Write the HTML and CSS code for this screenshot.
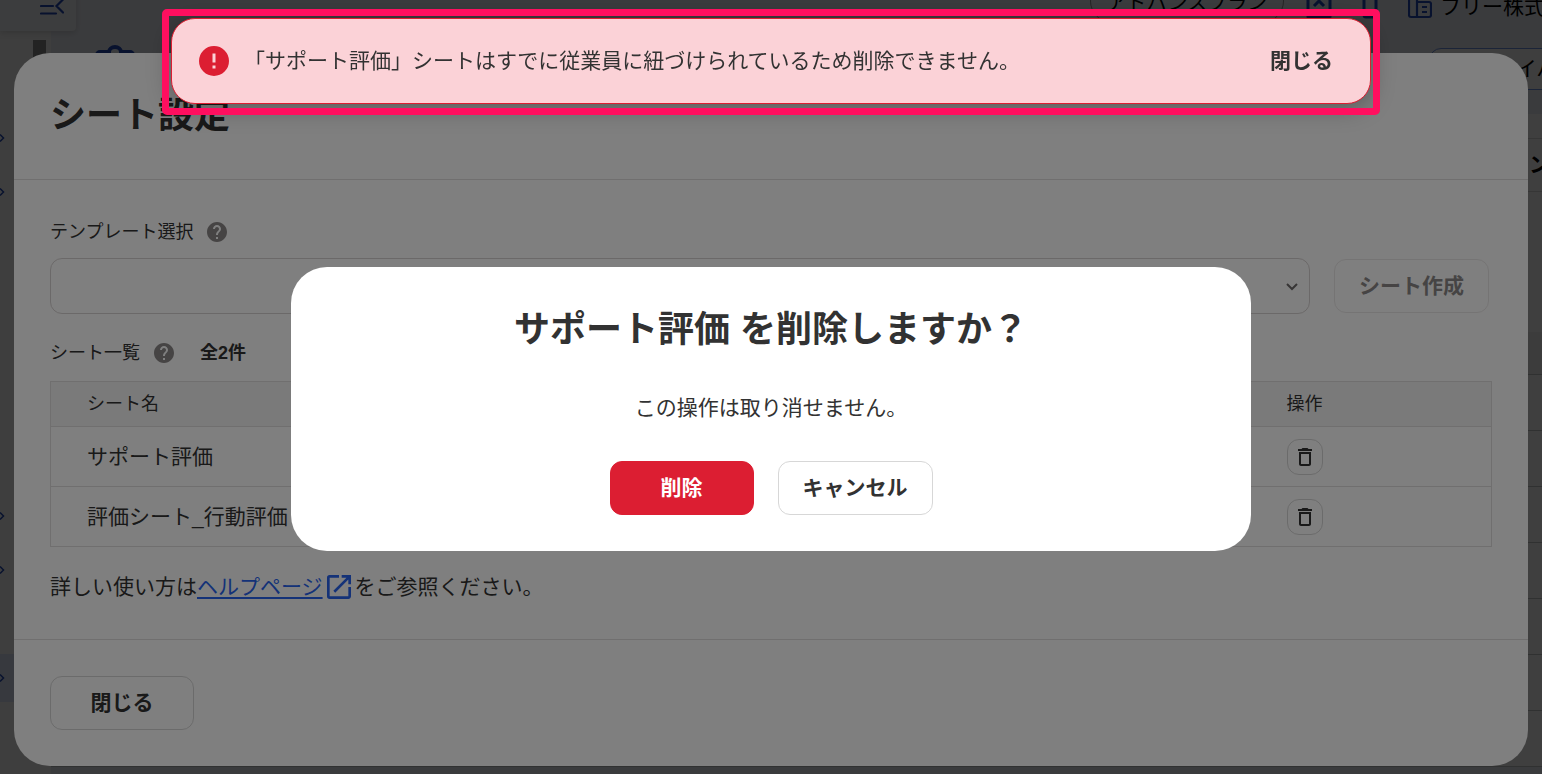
FILE: index.html
```html
<!DOCTYPE html>
<html lang="ja">
<head>
<meta charset="utf-8">
<title>シート設定</title>
<link rel="stylesheet" href="styles.css">
</head>
<body>
<div class="app">
  <aside class="sidebar">
    <button class="collapse" type="button" aria-label="メニューを閉じる">
      <svg viewBox="0 0 24 20" width="24" height="20"><path d="M1 2h13M1 10h12M1 17.500h15M23 3.500l-6.500 6.500 6.500 6.500" fill="none" stroke="currentColor" stroke-width="2.200" stroke-linecap="round"/></svg>
    </button>
    <span class="scroll-thumb"></span>
    <ul class="side-list">
      <li><svg class="chev" viewBox="0 0 6 10"><path d="M0 1.500L3.500 5 0 8.500"/></svg></li>
      <li><svg class="chev" viewBox="0 0 6 10"><path d="M0 1.500L3.500 5 0 8.500"/></svg></li>
      <li></li><li></li><li></li><li></li><li></li>
      <li><svg class="chev" viewBox="0 0 6 10"><path d="M0 1.500L3.500 5 0 8.500"/></svg></li>
      <li><svg class="chev" viewBox="0 0 6 10"><path d="M0 1.500L3.500 5 0 8.500"/></svg></li>
      <li></li>
      <li class="active"><svg class="chev" viewBox="0 0 6 10"><path d="M0 1.500L3.500 5 0 8.500"/></svg></li>
    </ul>
  </aside>
  <main class="main">
    <header class="topbar">
      <span class="plan">アドバンスプラン</span>
      <svg class="top-icon" viewBox="0 0 26 24" width="26" height="24"><path d="M2 3v19h22V3M8 11l5-5 5 5M2 3h22" fill="none" stroke="currentColor" stroke-width="3" stroke-linejoin="round"/></svg>
      <svg class="top-icon phone" viewBox="0 0 16 24" width="16" height="24"><rect x="2" y="1" width="12" height="21" rx="2" fill="none" stroke="currentColor" stroke-width="3"/></svg>
      <svg class="top-icon" viewBox="0 0 24 24" width="24" height="24"><path d="M8 3H3a2 2 0 0 0-2 2v15a2 2 0 0 0 2 2h18a2 2 0 0 0 2-2V9a2 2 0 0 0-2-2H9V1M9 3v19M14 12h5M14 17h5" fill="none" stroke="currentColor" stroke-width="2.200"/></svg>
      <span class="company">フリー株式</span>
    </header>
    <div class="page-head">
      <svg class="head-icon" viewBox="0 0 40 36" width="40" height="36"><path d="M2 34V10a3 3 0 0 1 3-3h9a6 5 0 0 1 12 0h9a3 3 0 0 1 3 3v24z" fill="none" stroke="currentColor" stroke-width="4"/></svg>
      <button class="archive" type="button">アーカイバ</button>
    </div>
    <div class="panel">
      <div class="panel-tab">コメン</div>
      <div class="grid-head"></div>
      <div class="grid-row"></div><div class="grid-row"></div><div class="grid-row"></div><div class="grid-row"></div>
      <div class="grid-row"></div><div class="grid-row"></div><div class="grid-row"></div>
    </div>
  </main>
</div>

<div class="overlay">
  <section class="sheet" role="dialog" aria-labelledby="sheet-title">
    <header class="sheet-header"><h1 class="title" id="sheet-title">シート設定</h1></header>
    <div class="sheet-body">
      <div class="label-row">
        <label for="template">テンプレート選択</label>
        <svg class="help" viewBox="0 0 24 24"><use href="#help-icon"/></svg>
      </div>
      <div class="template-row">
        <div class="select-wrap">
          <select class="select" id="template"><option></option></select>
          <svg class="caret" viewBox="0 0 14 10" width="14" height="10"><path d="M2 2l5 5 5-5" fill="none" stroke="currentColor" stroke-width="2"/></svg>
        </div>
        <button class="btn" type="button" disabled>シート作成</button>
      </div>
      <div class="label-row">
        <span>シート一覧</span>
        <svg class="help" viewBox="0 0 24 24"><use href="#help-icon"/></svg>
        <strong class="count">全2件</strong>
      </div>
      <table class="table">
        <thead><tr><th>シート名</th><th class="ops">操作</th></tr></thead>
        <tbody>
          <tr><td>サポート評価</td><td><button class="trash" type="button" aria-label="サポート評価を削除"><svg viewBox="0 0 24 24" width="24" height="24"><use href="#trash-icon"/></svg></button></td></tr>
          <tr><td>評価シート_行動評価</td><td><button class="trash" type="button" aria-label="評価シート_行動評価を削除"><svg viewBox="0 0 24 24" width="24" height="24"><use href="#trash-icon"/></svg></button></td></tr>
        </tbody>
      </table>
      <p class="guide">詳しい使い方は<a class="link" href="#help">ヘルプページ</a><svg class="external" viewBox="0 0 24 24" width="32" height="32"><path fill="currentColor" d="M19 19H5V5h7V3H5a2 2 0 0 0-2 2v14a2 2 0 0 0 2 2h14c1.100 0 2-.9 2-2v-7h-2v7zM14 3v2h3.590l-9.830 9.830 1.410 1.410L19 6.410V10h2V3h-7z"/></svg>をご参照ください。</p>
    </div>
    <footer class="sheet-footer"><button class="btn wide" type="button">閉じる</button></footer>
  </section>
</div>

<div class="overlay overlay-confirm">
  <section class="confirm" role="alertdialog" aria-labelledby="confirm-title">
    <h2 class="title" id="confirm-title">サポート評価 を削除しますか？</h2>
    <p class="message">この操作は取り消せません。</p>
    <div class="actions">
      <button class="btn wide danger" type="button">削除</button>
      <button class="btn" type="button">キャンセル</button>
    </div>
  </section>
</div>

<div class="toast-frame">
  <div class="toast" role="alert">
    <svg class="alert-icon" viewBox="0 0 24 24" width="36" height="36"><path fill="currentColor" d="M12 2a10 10 0 1 0 0 20 10 10 0 0 0 0-20zm1 15h-2v-2h2v2zm0-4h-2V7h2v6z"/></svg>
    <span class="toast-text">「サポート評価」シートはすでに従業員に紐づけられているため削除できません。</span>
    <button class="toast-close" type="button">閉じる</button>
  </div>
</div>

<svg class="defs" width="0" height="0" aria-hidden="true">
  <symbol id="help-icon" viewBox="0 0 24 24"><path fill="currentColor" d="M12 2C6.480 2 2 6.480 2 12s4.480 10 10 10 10-4.480 10-10S17.520 2 12 2zm1 17h-2v-2h2v2zm2.070-7.750-.9.920C13.450 12.900 13 13.500 13 15h-2v-.5c0-1.100.45-2.100 1.170-2.830l1.240-1.260c.37-.36.590-.86.590-1.410 0-1.100-.9-2-2-2s-2 .9-2 2H8c0-2.210 1.790-4 4-4s4 1.790 4 4c0 .88-.36 1.680-.93 2.250z"/></symbol>
  <symbol id="trash-icon" viewBox="0 0 24 24"><path fill="currentColor" d="M16 9v10H8V9h8m-1.500-6h-5l-1 1H5v2h14V4h-3.500l-1-1zM18 7H6v12c0 1.100.9 2 2 2h8c1.100 0 2-.9 2-2V7z"/></symbol>
</svg>
</body>
</html>
```

FILE: styles.css
```css
* {
  box-sizing: border-box;
}

body {
  margin: 0;
  height: 100vh;
  overflow: hidden;
  background: #ebeef6;
  color: #323232;
  font-family: "Liberation Sans", "Noto Sans CJK JP", sans-serif;
  font-size: 21px;
  line-height: 32px;
}

button,
select {
  font: inherit;
  color: inherit;
}

svg {
  flex: none;
}

h1,
h2,
p,
ul {
  margin: 0;
  padding: 0;
}

.defs {
  position: absolute;
}

/* Page under the dialogs */
.app {
  display: flex;
  height: 100vh;
  overflow: hidden;
  color: #000;
}

.sidebar {
  position: relative;
  flex: none;
  width: 51px;
  background: #f8f8f8;
}

.collapse {
  position: absolute;
  left: 0;
  top: -16px;
  width: 76px;
  height: 47px;
  padding: 0 12px 0 0;
  border: 0;
  border-radius: 0 0 4px 0;
  background: #f3f5f8;
  box-shadow: 0 2px 6px rgba(0, 0, 0, 0.15);
  color: #2048b8;
  text-align: right;
  line-height: 20px;
}

.scroll-thumb {
  position: absolute;
  left: 33px;
  top: 40px;
  width: 13px;
  height: 200px;
  background: #8c8c8c;
}

.side-list {
  display: grid;
  gap: 6px;
  padding-top: 114px;
  list-style: none;
}

.side-list li {
  display: flex;
  align-items: center;
  height: 48px;
}

.side-list .active {
  background: #dce4f8;
}

.chev {
  width: 6px;
  height: 10px;
  fill: none;
  stroke: #2048b8;
  stroke-width: 1.5;
}

.main {
  flex: 1;
  min-width: 0;
}

.topbar {
  display: flex;
  align-items: center;
  justify-content: flex-end;
  height: 56px;
  margin-top: -21px;
  margin-right: -3px;
  white-space: nowrap;
}

.plan {
  align-self: flex-start;
  width: 194px;
  height: 44px;
  padding: 7px 12px 0;
  border: 1px solid #909090;
  border-radius: 22px;
  font-size: 20px;
  text-align: center;
}

.top-icon {
  margin-left: 22px;
  color: #2048b8;
}

.phone {
  margin-left: 30px;
}

.phone + .top-icon {
  margin-left: 30px;
}

.company {
  margin-left: 8px;
}

.page-head {
  display: flex;
  align-items: flex-start;
  justify-content: space-between;
  height: 79px;
  padding: 10px 0 0 44px;
  margin-right: -80px;
}

.head-icon {
  color: #2048b8;
}

.archive {
  width: 193px;
  height: 42px;
  margin-top: 3px;
  padding: 0 24px;
  border: 1px solid #6f92e0;
  border-radius: 12px;
  background: #f8f8fa;
  text-align: left;
  white-space: nowrap;
}

.panel {
  background: #fff;
}

.panel-tab {
  height: 78px;
  padding: 35px 0 0;
  margin-right: -8px;
  border-bottom: 1px solid #d8d8d8;
  background: linear-gradient(#d8d8d8, #d8d8d8) 0 24px / 100% 1px no-repeat;
  font-weight: bold;
  text-align: right;
}

.grid-head {
  height: 183px;
  border-bottom: 1px solid #c0c4c4;
  background: linear-gradient(#f0f0f0, #f0f0f0) 0 100% / 100% 42px no-repeat;
}

.grid-row {
  height: 56px;
  border-bottom: 1px solid #c0c4c4;
}

/* Dialogs */
.overlay {
  position: fixed;
  inset: 0;
  display: flex;
  align-items: center;
  justify-content: center;
  padding: 53px 14px 8px;
  background: rgba(0, 0, 0, 0.5);
}

.overlay-confirm {
  padding-bottom: 9px;
}

.sheet {
  width: 100%;
  border-radius: 36px;
  background: #fff;
}

.sheet-header {
  padding: 36px;
  border-bottom: 1px solid #e1dfdf;
}

.title {
  font-size: 36px;
  line-height: 54px;
  font-weight: bold;
}

.sheet-body {
  padding: 36px;
}

.label-row {
  display: flex;
  align-items: center;
  gap: 12px;
  height: 31px;
  font-size: 18px;
}

.help {
  width: 24px;
  height: 24px;
  color: #8c8989;
}

.template-row {
  display: flex;
  align-items: center;
  gap: 24px;
  margin: 11px 3px 23px 0;
}

.select-wrap {
  position: relative;
  flex: 1;
}

.select {
  display: block;
  width: 100%;
  height: 56px;
  appearance: none;
  border: 1px solid #d7d2d2;
  border-radius: 12px;
  background: #fff;
}

.caret {
  position: absolute;
  right: 11px;
  top: 24px;
  color: #6e6b6b;
  pointer-events: none;
}

.btn {
  height: 54px;
  padding: 0 24px;
  border: 1px solid #d7d7d7;
  border-radius: 12px;
  background: #fff;
  font-weight: bold;
  white-space: nowrap;
}

.btn:disabled {
  border-color: #ebe9e9;
  color: #8c8989;
}

.wide {
  width: 144px;
}

.count {
  margin-left: 12px;
}

.table {
  width: 100%;
  margin-top: 13px;
  border: 1px solid #e1dfdf;
  border-collapse: collapse;
}

.table th {
  height: 45px;
  padding: 0 36px;
  background: #f5f5f5;
  font-size: 18px;
  line-height: 27px;
  font-weight: normal;
  text-align: left;
}

.table .ops {
  width: 241px;
}

.table td {
  height: 60px;
  padding: 0 36px;
  border-top: 1px solid #e1dfdf;
}

.trash {
  display: grid;
  place-items: center;
  width: 36px;
  height: 36px;
  padding: 0;
  border: 1px solid #d7d7d7;
  border-radius: 12px;
  background: #fff;
}

.guide {
  display: flex;
  margin-top: 24px;
}

.link {
  color: #2864f0;
  text-decoration: underline;
  text-decoration-thickness: 2px;
  text-underline-offset: 3px;
}

.external {
  color: #2864f0;
}

.sheet-footer {
  padding: 36px;
  border-top: 1px solid #e1dfdf;
}

.confirm {
  width: 960px;
  max-width: 100%;
  padding: 36px;
  border-radius: 36px;
  background: #fff;
  text-align: center;
}

.message {
  margin: 35px 0 37px;
}

.actions {
  display: flex;
  justify-content: center;
  gap: 24px;
}

.danger {
  border-color: #dc1e32;
  background: #dc1e32;
  color: #fff;
}

/* Notification */
.toast-frame {
  position: fixed;
  top: 9px;
  left: 162px;
  right: 162px;
  padding: 9px 9px 11px;
}

.toast-frame::after {
  content: "";
  position: absolute;
  inset: 0;
  border: 7px solid #ff0f5f;
  border-radius: 5px;
  pointer-events: none;
}

.toast {
  display: flex;
  align-items: center;
  gap: 12px;
  min-height: 86px;
  padding: 0 37px 0 24px;
  border: 1px solid #dc1e32;
  border-radius: 24px;
  background: #fbd2d7;
  box-shadow: 0 4px 24px rgba(0, 0, 0, 0.3);
}

.alert-icon {
  color: #dc1e32;
}

.toast-text {
  flex: 1;
}

.toast-close {
  padding: 0;
  border: 0;
  background: none;
  font-weight: bold;
}
```
